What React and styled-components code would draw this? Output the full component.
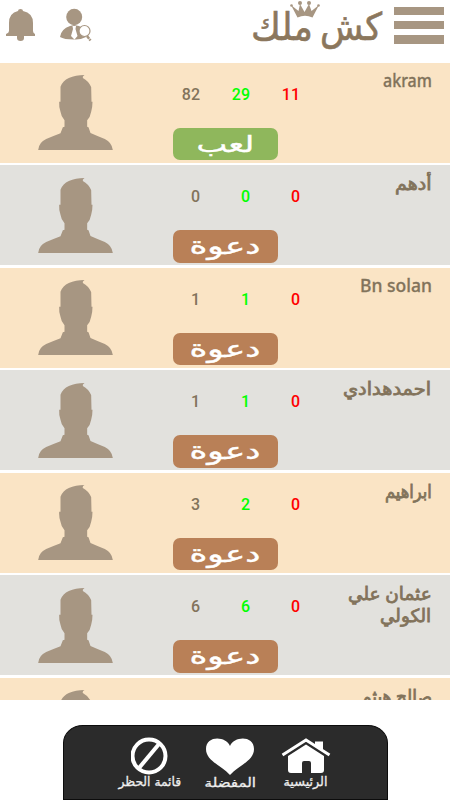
import { useLayoutEffect, useRef, useState } from 'react';
import styled, { createGlobalStyle } from 'styled-components';

const players = [
  {lines: [['akram', 49]], latin: true, games: 82, wins: 29, losses: 11, playing: true},
  {lines: [['أدهم', 37]], games: 0, wins: 0, losses: 0},
  {lines: [['Bn solan', 72]], latin: true, games: 1, wins: 1, losses: 0},
  {lines: [['احمدهدادي', 88]], games: 1, wins: 1, losses: 0},
  {lines: [['ابراهيم', 47]], games: 3, wins: 2, losses: 0},
  {lines: [['عثمان علي', 84], ['الكولي', 51]], games: 6, wins: 6, losses: 0},
  {lines: [['صالح هيثم', 71]], games: '', wins: '', losses: ''},
];

const GlobalStyle = createGlobalStyle`
  * {
    box-sizing: border-box;
  }

  body {
    margin: 0;
    background-color: white;
    font-family: 'Noto Sans', 'DejaVu Sans', sans-serif;
    overflow: hidden;
  }
`;

const Page = styled.div`
  width: 450px;
  height: 800px;
  display: flex;
  flex-direction: column;
`;

const Header = styled.header`
  height: 62.5px;
  flex: none;
  display: flex;
  align-items: flex-start;
`;

const BellIcon = styled.svg`
  width: 30px;
  height: 34px;
  margin: 8px 0 0 6px;
`;

const SearchUserIcon = styled.svg`
  width: 33px;
  height: 34px;
  margin: 8px 0 0 23px;
`;

const Logo = styled.svg`
  width: 134px;
  height: 60px;
  margin-left: 158px;
  overflow: visible;
`;

const MenuButton = styled.div`
  width: 50px;
  margin: 7px 0 0 10px;
  display: flex;
  flex-direction: column;
  gap: 6px;
`;

const MenuBar = styled.span`
  height: 8.2px;
  background-color: #a79682;
`;

const PlayerList = styled.main`
  height: 637.5px;
  flex: none;
  overflow: hidden;
  display: flex;
  flex-direction: column;
  gap: 2.5px;
`;

const PlayerRow = styled.section`
  height: 100px;
  flex: none;
  display: grid;
  grid-template-columns: 150px 150px 1fr;
  background-color: ${({$warm}) => ($warm ? '#fae4c5' : '#e2e1dd')};
`;

const Avatar = styled.svg`
  width: 75px;
  height: 75px;
  margin: 12.5px 0 0 37.5px;
`;

const Stats = styled.div`
  height: 65px;
  padding-top: 21px;
  display: grid;
  grid-template-columns: repeat(3, 50px);
  font-family: Roboto, sans-serif;
  font-size: 16px;
  font-weight: 500;
  line-height: 22px;
  text-align: right;
`;

const Stat = styled.span`
  color: ${({$color}) => $color};
`;

const ActionButton = styled.button`
  width: 105px;
  height: 32.5px;
  margin: 0 0 0 22.5px;
  padding: 0;
  display: flex;
  justify-content: center;
  align-items: center;
  border: none;
  border-radius: 7px;
  background-color: ${({$playing}) => ($playing ? '#8fb75c' : '#b98057')};
  color: white;
  font-family: 'DejaVu Sans', sans-serif;
  font-size: 23px;
  line-height: 28px;
  -webkit-text-stroke: 0.4px white;
`;

const Name = styled.div`
  padding: ${({$latin}) => ($latin ? '6px' : '7px')} 18.5px 0 0;
  display: flex;
  flex-direction: column;
  align-items: flex-end;
  color: #82735b;
  font-family: 'Noto Sans', 'DejaVu Sans', sans-serif;
  font-size: 18px;
  font-weight: 500;
  line-height: 22px;
  -webkit-text-stroke: ${({$latin}) => ($latin ? '0.3px' : '0.8px')} #82735b;
`;

const Fitted = styled.span`
  display: flex;
  justify-content: ${({$align}) => $align};
  width: ${({$width}) => $width}px;
  white-space: nowrap;
`;

const FittedInner = styled.span`
  flex: none;
  transform-origin: ${({$align}) => ($align === 'center' ? 'center' : 'right')};
`;

const Footer = styled.footer`
  width: 325px;
  height: 75px;
  margin: 25px auto 0;
  flex: none;
  display: flex;
  gap: 23px;
  padding: 11px 0 0 54px;
  border: 1px solid #0c0c0c;
  border-radius: 20px 20px 0 0 / 18px 18px 0 0;
  background-color: #2b2b2b;
`;

const Tab = styled.div`
  width: ${({$width}) => $width}px;
  display: flex;
  flex-direction: column;
  align-items: center;
  color: #eeeeee;
  font-family: 'DejaVu Sans', sans-serif;
  font-size: 12.5px;
  line-height: 14px;
  -webkit-text-stroke: 0.3px #eeeeee;
`;

const TabIcon = styled.svg`
  width: ${({$width}) => $width}px;
  height: 38px;
  flex: none;
  margin-bottom: ${({$gap}) => $gap}px;
`;

// Stretches or squeezes its text horizontally to the given width
const FitText = ({width, align = 'flex-end', children}) => {
  const ref = useRef(null);
  const [scale, setScale] = useState(1);

  useLayoutEffect(() => {
    setScale(width / ref.current.offsetWidth);
  }, [width]);

  return (
    <Fitted $width={width} $align={align}>
      <FittedInner ref={ref} $align={align} style={{transform: `scaleX(${scale})`}}>
        {children}
      </FittedInner>
    </Fitted>
  );
};

const Silhouette = () => (
  <Avatar viewBox='112.5 45 225 225'>
    <path
      fill='#a79682'
      d='M252 45Q245 49 247 54Q264 63 272 81L273 125H276Q276 142 272 155Q269 172 260 181V200L264 202L270 219Q288 227 313 237Q334 247 337 270H113Q115 247 137 237Q162 227 180 220L187 202L192 200V181Q182 170 180 155Q175 142 176 125H180V80Q187 62 205 54Q225 45 252 45Z'
    />
  </Avatar>
);

const LogoWord = ({x, width, children}) => (
  <text
    x={x}
    y='40'
    textLength={width}
    lengthAdjust='spacingAndGlyphs'
    fontFamily='DejaVu Sans, sans-serif'
    fontSize='38'
    fill='#8b775d'
    stroke='#8b775d'
    strokeWidth='0.6'
  >
    {children}
  </text>
);

const Player = ({player, index}) => (
  <PlayerRow $warm={index % 2 === 0}>
    <Silhouette />
    <div>
      <Stats>
        <Stat $color='#82735b'>{player.games}</Stat>
        <Stat $color='#00ff00'>{player.wins}</Stat>
        <Stat $color='#ff0000'>{player.losses}</Stat>
      </Stats>
      <ActionButton $playing={player.playing}>
        <FitText width={player.playing ? 58 : 71} align='center'>
          {player.playing ? 'لعب' : 'دعوة'}
        </FitText>
      </ActionButton>
    </div>
    <Name $latin={player.latin}>
      {player.lines.map(([text, width]) => (
        <FitText key={text} width={width}>{text}</FitText>
      ))}
    </Name>
  </PlayerRow>
);

const App = () => (
  <Page>
    <GlobalStyle />
    <Header>
      <BellIcon viewBox='0 0 30 34' fill='#a79682'>
        <path d='M12 3Q12 1 14.500 1Q17 1 17 3Q27 5 27 15V23Q27 25 29 26V28H0V26Q3 25 3 23V15Q3 5 12 3Z' />
        <path d='M11 27H18V30Q18 33 14.500 33Q11 33 11 30Z' />
      </BellIcon>
      <SearchUserIcon viewBox='0 0 33 34'>
        <ellipse cx='15.200' cy='9' rx='8' ry='8.200' fill='#a79682' />
        <path d='M1 29Q2 21 11 18L15 17L20 18Q26 20 27 29Q21 32 15 31.500Q5 31.500 1 29Z' fill='#a79682' />
        <path d='M13.500 18H17L16.500 21L18.500 28L15.500 31.500L12 28L14 21Z' fill='white' />
        <circle cx='25.500' cy='23' r='5.500' fill='white' stroke='#a79682' strokeWidth='1.200' />
        <path d='M28 28L31.500 32.500' stroke='#a79682' strokeWidth='2.500' strokeDasharray='3.500 .7' />
      </SearchUserIcon>
      <Logo viewBox='250 0 134 60'>
        <LogoWord x='320' width='62'>كش</LogoWord>
        <LogoWord x='251' width='62'>ملك</LogoWord>
        <g fill='#a79682'>
          <path d='M291 5L298.500 11L300 4L304.500 12L309 4L311.500 11L319 5L312.500 17.500Q305 14 297.500 17.500Z' />
          <circle cx='300' cy='3' r='2' />
          <circle cx='309' cy='3' r='2' />
          <circle cx='291.500' cy='5.500' r='1.300' />
          <circle cx='318.500' cy='5.500' r='1.300' />
        </g>
      </Logo>
      <MenuButton>
        <MenuBar />
        <MenuBar />
        <MenuBar />
      </MenuButton>
    </Header>
    <PlayerList>
      {players.map((player, index) => (
        <Player key={player.lines[0][0]} player={player} index={index} />
      ))}
    </PlayerList>
    <Footer>
      <Tab $width={64}>
        <TabIcon viewBox='0 0 38 38' $width={38} $gap={0}>
          <g fill='none' stroke='white' strokeWidth='4'>
            <circle cx='18' cy='19' r='16.500' />
            <path d='M8 31L28 7' />
          </g>
        </TabIcon>
        <FitText width={63} align='center'>قائمة الحظر</FitText>
      </Tab>
      <Tab $width={52}>
        <TabIcon viewBox='0 0 50 38' $width={50} $gap={1}>
          <path fill='white' d='M24 9C28 -1 48 -2 48 12C48 24 33 28 24 38C15 28 0 24 0 12C0 -2 20 -1 24 9Z' />
        </TabIcon>
        <FitText width={52} align='center'>المفضلة</FitText>
      </Tab>
      <Tab $width={52}>
        <TabIcon viewBox='0 0 50 38' $width={50} $gap={0}>
          <path d='M1.500 18L25 3L48.500 18' fill='none' stroke='white' strokeWidth='3' />
          <path d='M34 4.500H42V14L34 9Z' fill='white' />
          <path d='M7 19L25 7.500L43 19V33Q43 36 40 36H30V26Q30 24 28 24H23Q21 24 21 26V36H10Q7 36 7 33Z' fill='white' />
        </TabIcon>
        <FitText width={44} align='center'>الرئيسية</FitText>
      </Tab>
    </Footer>
  </Page>
);

export default App;
